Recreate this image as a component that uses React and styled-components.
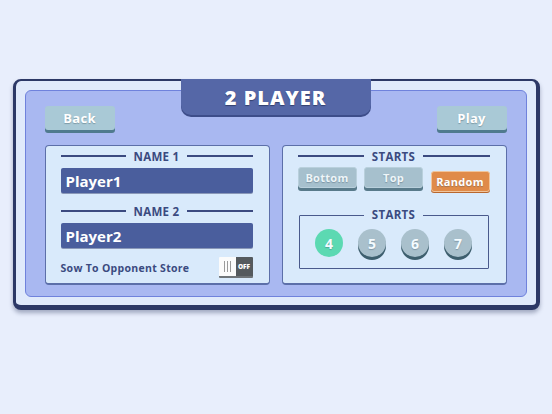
import React, { useState } from "react";
import styled, { createGlobalStyle } from "styled-components";

const Global = createGlobalStyle`
  html, body {
    margin: 0;
    padding: 0;
    background: #e8eefc;
    font-family: "Open Sans", "DejaVu Sans", sans-serif;
  }
`;

const Page = styled.div`
  width: 552px;
  height: 414px;
  display: flex;
  justify-content: center;
  padding-top: 79px;
  box-sizing: border-box;
`;

const Frame = styled.div`
  position: relative;
  width: 527px;
  height: 231px;
  box-sizing: border-box;
  background: #e0eafb;
  border: 2px solid #2c3866;
  border-left-width: 3px;
  border-right-width: 4px;
  border-bottom-width: 5px;
  border-radius: 8px;
  box-shadow: 0 3px 4px rgba(30, 40, 80, 0.35);
  padding: 9px 9px 8px 9px;
`;

const TitleTab = styled.div`
  position: absolute;
  top: -2px;
  left: 165px;
  width: 190px;
  height: 36px;
  background: #5567a7;
  border-radius: 0 0 10px 10px;
  box-shadow: 0 2px 0 #3d4d8a;
  display: flex;
  align-items: center;
  justify-content: center;
  color: #fff;
  font-size: 20px;
  font-weight: 800;
  letter-spacing: 1px;
  text-shadow: 0 1px 1px #34406e;
  z-index: 2;
`;

const Panel = styled.div`
  height: 100%;
  box-sizing: border-box;
  background: #a9b8f1;
  border: 1px solid #6f82dc;
  border-radius: 6px;
  padding: 15px 19px 11px 19px;
  display: flex;
  flex-direction: column;
  gap: 12px;
`;

const TopRow = styled.div`
  display: flex;
  justify-content: space-between;
`;

const NavButton = styled.button`
  width: 70px;
  height: 24px;
  border: none;
  border-radius: 3px;
  background: #a9c9d6;
  box-shadow: 0 3px 0 #4f7a8e;
  margin-bottom: 3px;
  color: #fff;
  font-family: inherit;
  font-size: 13px;
  font-weight: 700;
  letter-spacing: 0.3px;
  text-shadow: 0 1px 1px #7e9aa6;
  padding: 0;
`;

const Cards = styled.div`
  display: flex;
  gap: 12px;
  flex: 1;
`;

const Card = styled.div`
  width: 225px;
  box-sizing: border-box;
  background: #d9eafb;
  border: 1px solid #5c6fa9;
  border-bottom-width: 2px;
  border-radius: 4px;
  padding: 2px 16px 0 15px;
  display: flex;
  flex-direction: column;
`;

const Heading = styled.div`
  display: flex;
  align-items: center;
  gap: 8px;
  color: #3b4a80;
  font-size: 11.5px;
  font-weight: 700;
  letter-spacing: 0.3px;
  height: 16px;
  flex-shrink: 0;
  margin-top: ${(p) => p.$top || 0}px;

  &::before,
  &::after {
    content: "";
    flex: 1;
    height: 1.5px;
    background: #3b4a80;
  }
`;

const NameInput = styled.input`
  margin-top: 4px;
  width: 100%;
  height: 25px;
  box-sizing: border-box;
  border: none;
  border-radius: 2px;
  background: #4a5e9d;
  box-shadow: 0 1px 0 #8a98b8;
  color: #fff;
  font-family: inherit;
  font-size: 15px;
  font-weight: 700;
  padding: 0 5px;
  outline: none;
`;

const OptionRow = styled.div`
  display: flex;
  align-items: center;
  justify-content: space-between;
  margin-top: 9px;
`;

const OptionLabel = styled.span`
  color: #3b4a80;
  font-size: 10.5px;
  font-weight: 700;
  letter-spacing: 0.3px;
`;

const Toggle = styled.div`
  width: 34px;
  height: 19px;
  display: flex;
  border-bottom: 2px solid #6f7478;
  border-radius: 1px;
  overflow: hidden;
`;

const ToggleKnob = styled.div`
  flex: 1;
  background: #fbfbfb;
  display: flex;
  align-items: center;
  justify-content: center;
  gap: 2px;

  span {
    width: 1px;
    height: 11px;
    background: #9a9a9a;
  }
`;

const ToggleState = styled.div`
  flex: 1;
  background: #555a5e;
  color: #fff;
  font-size: 6.5px;
  font-weight: 800;
  display: flex;
  align-items: center;
  justify-content: center;
`;

const ChoiceRow = styled.div`
  display: flex;
  justify-content: space-between;
  margin-top: 3px;
  height: 28px;
  flex-shrink: 0;
`;

const Choice = styled.button`
  width: 59px;
  height: 21px;
  border: 1px solid ${(p) => (p.$active ? "#f0c59c" : "#b9d0dc")};
  border-radius: 3px;
  padding: 0;
  margin-top: ${(p) => (p.$active ? 4 : 0)}px;
  background: ${(p) => (p.$active ? "#e08b49" : "#a6c0cd")};
  box-shadow: ${(p) => (p.$active ? "0 1px 0 #b8672e" : "0 3px 0 #587a8a")};
  color: ${(p) => (p.$active ? "#fff" : "#eef5f8")};
  font-family: inherit;
  font-size: 11px;
  font-weight: 700;
  letter-spacing: 0.3px;
  text-shadow: 0 1px 1px rgba(60, 80, 100, 0.4);
`;

const Box = styled.fieldset`
  margin: 14px 1px 0 1px;
  padding: 0 0 11px 0;
  border: 1px solid #4a5a8c;
  border-radius: 1px;
  display: flex;
  justify-content: center;
  gap: 15px;
`;

const Legend = styled.legend`
  padding: 0 8px;
  margin: 0 auto;
  color: #3b4a80;
  font-size: 11.5px;
  font-weight: 700;
  letter-spacing: 0.3px;
  line-height: 12px;
`;

const Pit = styled.button`
  width: 28px;
  height: 28px;
  border-radius: 50%;
  border: none;
  padding: 0;
  margin-top: 8px;
  background: ${(p) => (p.$active ? "#5cd9b2" : "#a9c0cc")};
  box-shadow: ${(p) => (p.$active ? "none" : "0 3px 0 #3e5f6e")};
  color: #f4fbff;
  font-family: inherit;
  font-size: 14px;
  font-weight: 700;
  text-shadow: 0 1px 1px rgba(60, 80, 100, 0.35);
`;

export default function App() {
  const [starts, setStarts] = useState("Random");
  const [seeds, setSeeds] = useState(4);

  return (
    <>
      <Global />
      <Page>
        <Frame>
          <TitleTab>2 PLAYER</TitleTab>
          <Panel>
            <TopRow>
              <NavButton>Back</NavButton>
              <NavButton>Play</NavButton>
            </TopRow>
            <Cards>
              <Card>
                <Heading>NAME 1</Heading>
                <NameInput defaultValue="Player1" />
                <Heading $top={10}>NAME 2</Heading>
                <NameInput defaultValue="Player2" />
                <OptionRow>
                  <OptionLabel>Sow To Opponent Store</OptionLabel>
                  <Toggle>
                    <ToggleKnob>
                      <span />
                      <span />
                      <span />
                    </ToggleKnob>
                    <ToggleState>OFF</ToggleState>
                  </Toggle>
                </OptionRow>
              </Card>
              <Card>
                <Heading>STARTS</Heading>
                <ChoiceRow>
                  {["Bottom", "Top", "Random"].map((c) => (
                    <Choice key={c} $active={starts === c} onClick={() => setStarts(c)}>
                      {c}
                    </Choice>
                  ))}
                </ChoiceRow>
                <Box>
                  <Legend>STARTS</Legend>
                  {[4, 5, 6, 7].map((n) => (
                    <Pit key={n} $active={seeds === n} onClick={() => setSeeds(n)}>
                      {n}
                    </Pit>
                  ))}
                </Box>
              </Card>
            </Cards>
          </Panel>
        </Frame>
      </Page>
    </>
  );
}
